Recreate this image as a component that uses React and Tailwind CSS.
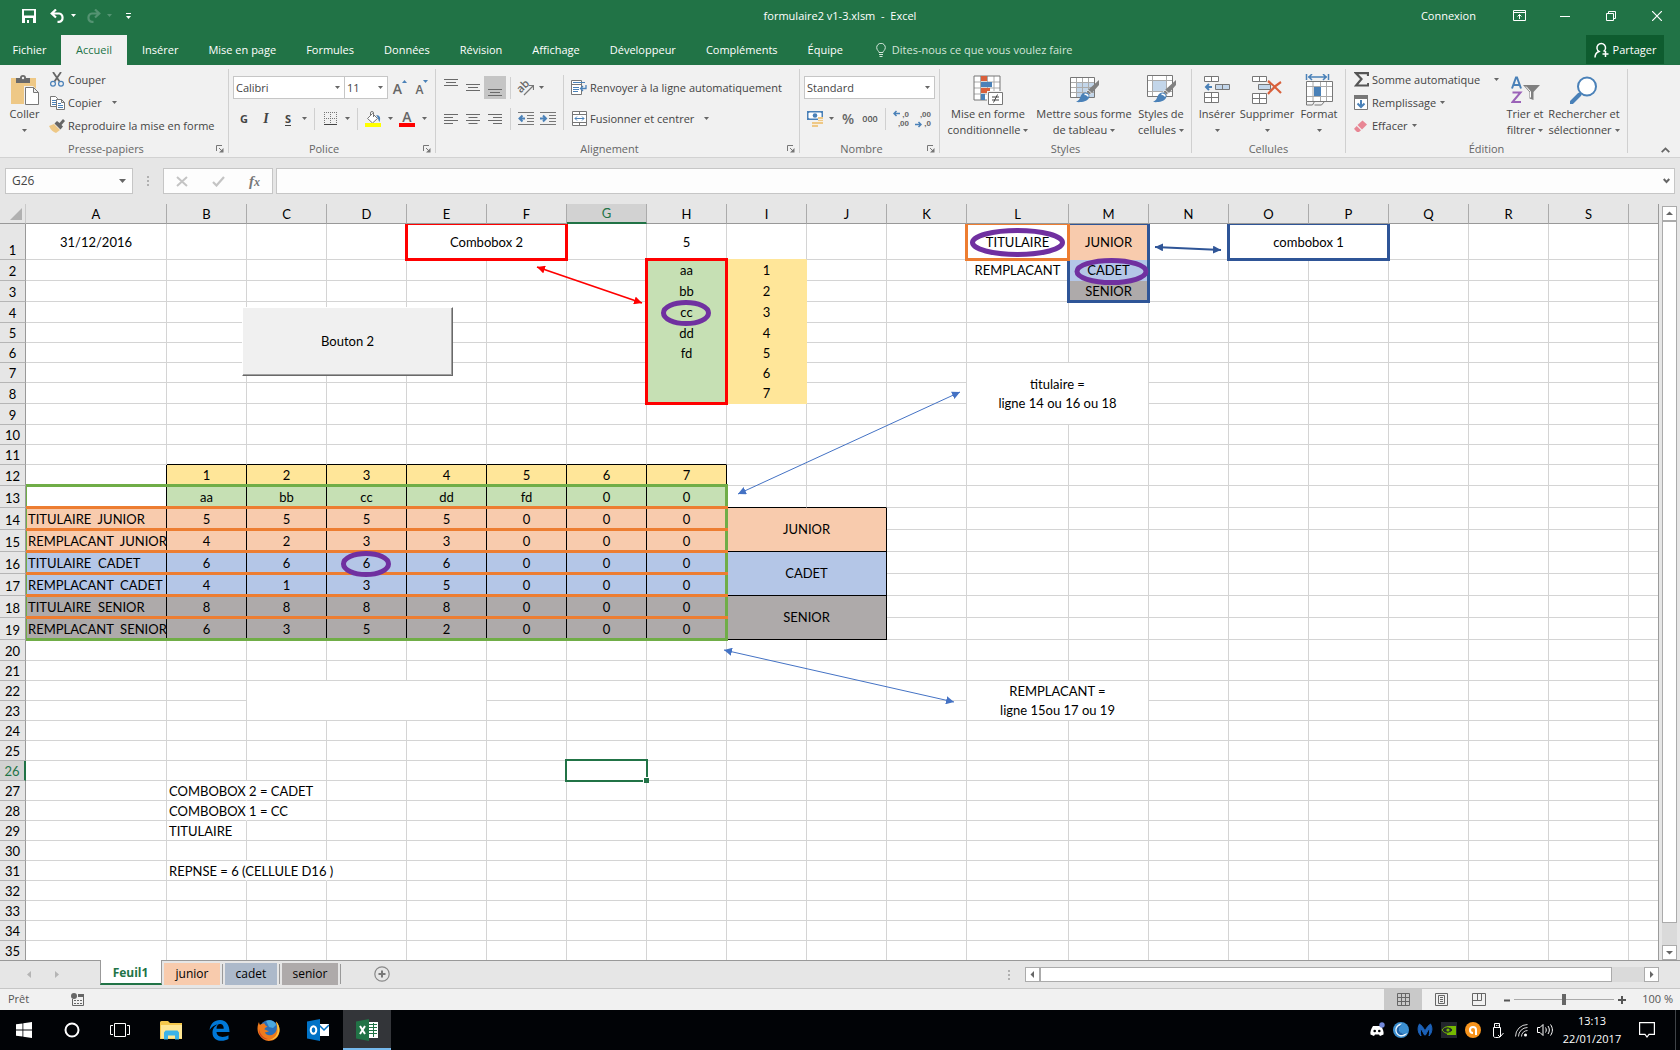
import { Fragment } from 'react';

const COLS = [
    ['A', 141], ['B', 80], ['C', 80], ['D', 80], ['E', 80], ['F', 80], ['G', 80], ['H', 80], ['I', 80], ['J', 80],
    ['K', 80], ['L', 102], ['M', 80], ['N', 80], ['O', 80], ['P', 80], ['Q', 80], ['R', 80], ['S', 80],
];
const ROWS = [36, 21, 21, 21, 20, 20, 20, 21, 21, 20, 20, 21, 22, 22, 22, 22, 22, 22, 22, 21, ...Array(15).fill(20)];
const LETTERS = COLS.map((c) => c[0]);

const GRID = 'border-r-[#d4d4d4] border-b-[#d4d4d4]';
const BLACK = 'border-r-black border-b-black';
const PEACH = 'bg-[#f8cbad]';
const BLUE = 'bg-[#b4c6e7]';
const GRAY = 'bg-[#aeaaaa]';
const YELLOW = 'bg-[#ffe699]';
const GREEN = 'bg-[#c6e0b4]';

const cells = {
    A1: { text: '31/12/2016' },
    E1: { text: 'Combobox 2', cols: 2 },
    H1: { text: '5' },
    I1: { line: 'border-r-[#d4d4d4] border-b-[#ffe699]' },
    L1: { text: 'TITULAIRE' },
    M1: { text: 'JUNIOR', fill: PEACH, line: 'border-r-[#f8cbad] border-b-[#f8cbad]' },
    O1: { text: 'combobox 1', cols: 2 },
    L2: { text: 'REMPLACANT' },
    M2: { text: 'CADET', fill: BLUE, line: 'border-r-[#b4c6e7] border-b-[#b4c6e7]' },
    M3: { text: 'SENIOR', fill: GRAY, line: 'border-r-[#aeaaaa] border-b-[#aeaaaa]' },
    L7: { text: 'titulaire =\nligne 14 ou 16 ou 18', cols: 2, rows: 3 },
    C22: { cols: 3, rows: 2 },
    L22: { text: 'REMPLACANT =\nligne 15ou 17 ou 19', cols: 2, rows: 2 },
    I13: { line: 'border-r-[#d4d4d4] border-b-black' },
    J13: { line: 'border-r-[#d4d4d4] border-b-black' },
    I14: { text: 'JUNIOR', cols: 2, rows: 2, fill: PEACH, line: BLACK },
    I16: { text: 'CADET', cols: 2, rows: 2, fill: BLUE, line: BLACK },
    I18: { text: 'SENIOR', cols: 2, rows: 2, fill: GRAY, line: BLACK },
    B27: { text: 'COMBOBOX 2 = CADET', left: true, line: 'border-r-white border-b-[#d4d4d4]' },
    B28: { text: 'COMBOBOX 1 = CC', left: true, line: 'border-r-white border-b-[#d4d4d4]' },
    B29: { text: 'TITULAIRE', left: true },
    B31: { text: 'REPNSE = 6 (CELLULE D16 )', left: true, line: 'border-r-white border-b-[#d4d4d4]' },
    C31: { line: 'border-r-white border-b-[#d4d4d4]' },
    A12: { line: 'border-r-black border-b-[#d4d4d4]' },
    A13: { line: 'border-r-black border-b-[#d4d4d4]' },
};

['aa', 'bb', 'cc', 'dd', 'fd', '', ''].forEach((text, i) => {
    cells['H' + (i + 2)] = { text, fill: GREEN, line: 'border-r-[#c6e0b4] border-b-[#c6e0b4]' };
    cells['I' + (i + 2)] = { text: String(i + 1), fill: YELLOW, line: 'border-r-[#ffe699] border-b-[#ffe699]' };
});

const scores = [
    [12, '', YELLOW, ['1', '2', '3', '4', '5', '6', '7']],
    [13, '', GREEN, ['aa', 'bb', 'cc', 'dd', 'fd', '0', '0']],
    [14, 'TITULAIRE  JUNIOR', PEACH, ['5', '5', '5', '5', '0', '0', '0']],
    [15, 'REMPLACANT  JUNIOR', PEACH, ['4', '2', '3', '3', '0', '0', '0']],
    [16, 'TITULAIRE  CADET', BLUE, ['6', '6', '6', '6', '0', '0', '0']],
    [17, 'REMPLACANT  CADET', BLUE, ['4', '1', '3', '5', '0', '0', '0']],
    [18, 'TITULAIRE  SENIOR', GRAY, ['8', '8', '8', '8', '0', '0', '0']],
    [19, 'REMPLACANT  SENIOR', GRAY, ['6', '3', '5', '2', '0', '0', '0']],
];
scores.forEach(([row, label, fill, values]) => {
    if (label) cells['A' + row] = { text: label, left: true, fill, line: BLACK };
    values.forEach((text, i) => {
        cells[LETTERS[i + 1] + row] = { text, fill, line: BLACK };
    });
});
LETTERS.slice(1, 8).forEach((l) => {
    cells[l + 11] = { line: 'border-r-[#d4d4d4] border-b-black' };
});

// cells hidden under a merged one
const covered = new Set();
Object.entries(cells).forEach(([ref, c]) => {
    const col = LETTERS.indexOf(ref[0]);
    const row = Number(ref.slice(1));
    for (let r = 0; r < (c.rows || 1); r++) {
        for (let k = 0; k < (c.cols || 1); k++) {
            if (r || k) covered.add(LETTERS[col + k] + (row + r));
        }
    }
});

const lineX = (n) => COLS.slice(0, n).reduce((sum, c) => sum + c[1], 0) - 1;
const lineY = (n) => ROWS.slice(0, n).reduce((sum, h) => sum + h, 0) - 1;

function Outline({ from, to, className, children }) {
    const x1 = lineX(LETTERS.indexOf(from[0]));
    const x2 = lineX(LETTERS.indexOf(to[0]) + 1);
    const y1 = lineY(Number(from.slice(1)) - 1);
    const y2 = lineY(Number(to.slice(1)));
    return (
        <div
            className={'absolute pointer-events-none ' + className}
            style={{ left: x1 - 1, top: y1 - 1, width: x2 - x1 + 3, height: y2 - y1 + 3 }}
        >
            {children}
        </div>
    );
}

function Caret({ color = '#666' }) {
    return (
        <svg width="5" height="3" viewBox="0 0 5 3" className="shrink-0">
            <path d="M0 0h5L2.5 3z" fill={color} />
        </svg>
    );
}

function Svg({ w = 16, h = 16, children, className = '' }) {
    return (
        <svg width={w} height={h} viewBox={`0 0 ${w} ${h}`} fill="none" className={'shrink-0 ' + className}>
            {children}
        </svg>
    );
}

/* ---------- title bar ---------- */

function TitleBar() {
    return (
        <div className="h-[35px] pb-1 grid grid-cols-[1fr_auto_1fr] items-center text-white">
            <div className="flex items-center pl-[22px]">
                <button aria-label="Enregistrer">
                    <Svg w={14} h={14}>
                        <path fillRule="evenodd" fill="#fff" d="M0 0h14v14H0zM2 1.500v5h10v-5zM3 9v5h2v-3h2v3h4V9z" />
                    </Svg>
                </button>
                <button aria-label="Annuler" className="ml-3.5">
                    <Svg w={15} h={14}>
                        <path d="M1.500 4.500H9a4.200 4.200 0 0 1 0 8.300H7.500M6 .5l-4.300 4L6 8.500" stroke="#fff" strokeWidth="2.200" />
                    </Svg>
                </button>
                <button aria-label="Options d'annulation" className="ml-1.5"><Caret color="#fff" /></button>
                <button aria-label="Rétablir" className="ml-2.5">
                    <Svg w={15} h={14}>
                        <path d="M13.500 4.500H6a4.200 4.200 0 0 0 0 8.300h1.500M9 .5l4.300 4L9 8.500" stroke="#549372" strokeWidth="2.200" />
                    </Svg>
                </button>
                <button aria-label="Options de rétablissement" className="ml-1.5"><Caret color="#549372" /></button>
                <button aria-label="Personnaliser la barre" className="ml-3.5">
                    <Svg w={5} h={6}>
                        <path d="M0 .5h5" stroke="#fff" />
                        <path d="M0 3h5L2.500 6z" fill="#fff" />
                    </Svg>
                </button>
            </div>
            <h1 className="text-[11px] leading-4 whitespace-pre">formulaire2 v1-3.xlsm  -  Excel</h1>
            <div className="flex items-center justify-end">
                <button className="mr-5">Connexion</button>
                <button aria-label="Options d'affichage du ruban" className="w-[46px] flex justify-center">
                    <Svg w={13} h={11}>
                        <path d="M.5.5h12v10H.5zM.5 2.500h12M6.500 9V4.500M4.500 6.500l2-2 2 2" stroke="#fff" />
                    </Svg>
                </button>
                <button aria-label="Réduire" className="w-[46px] flex justify-center">
                    <Svg w={10} h={10}><path d="M0 5.500h10" stroke="#fff" /></Svg>
                </button>
                <button aria-label="Restaurer" className="w-[46px] flex justify-center">
                    <Svg w={10} h={10}><path d="M.5 2.500h7v7h-7zM2.500 2.500v-2h7v7h-2" stroke="#fff" /></Svg>
                </button>
                <button aria-label="Fermer" className="w-[46px] flex justify-center">
                    <Svg w={10} h={10}><path d="M0 0l10 10M10 0L0 10" stroke="#fff" strokeWidth="1.200" /></Svg>
                </button>
            </div>
        </div>
    );
}

const tabs = ['Insérer', 'Mise en page', 'Formules', 'Données', 'Révision', 'Affichage', 'Développeur', 'Compléments', 'Équipe'];

function TabBar() {
    return (
        <div className="h-[30px] flex items-stretch text-white">
            <button className="w-[61px] pr-0.5">Fichier</button>
            <button className="w-[66px] bg-[#f1f1f1] text-[#217346]">Accueil</button>
            {tabs.map((t) => (
                <button key={t} className="px-[15px]">{t}</button>
            ))}
            <label className="flex items-center pl-[18px] gap-1.5 text-[#d3e5da]">
                <Svg w={10} h={14}>
                    <path d="M3 9.500C3 8 .7 7.200.7 4.600a4.200 4.200 0 0 1 8.600 0C9.300 7.200 7 8 7 9.500zM3 11.500h4M3.500 13.500h3" stroke="#d3e5da" />
                </Svg>
                <input
                    aria-label="Rechercher une commande"
                    placeholder="Dites-nous ce que vous voulez faire"
                    className="w-[220px] bg-transparent outline-none placeholder:text-[#d3e5da]"
                />
            </label>
            <button className="ml-auto mr-4 mb-px w-[78px] bg-[#0e5c2f] flex items-center justify-center gap-1">
                <Svg w={15} h={16}>
                    <path d="M1 15.500c0-3.500 1.500-5 4-6a4.300 4.300 0 1 1 4.500 0M11.500 9v6M8.500 12h6" stroke="#fff" strokeWidth="1.500" />
                </Svg>
                Partager
            </button>
        </div>
    );
}

/* ---------- ribbon ---------- */

function Group({ label, width, launcher, children }) {
    return (
        <Fragment>
            <section aria-label={label} className={'flex flex-col pt-1 shrink-0 ' + width}>
                <div className="h-[72px] flex">{children}</div>
                <div className="h-4 flex items-center text-[#666]">
                    <span className="flex-1 text-center">{label}</span>
                    {launcher && (
                        <button aria-label={'Options ' + label} className="w-4 pr-1 flex justify-end">
                            <Svg w={8} h={8}>
                                <path d="M.5 6V.5H6M3 3l3 3" stroke="#777" />
                                <path d="M7.500 3v4.500H3z" fill="#777" />
                            </Svg>
                        </button>
                    )}
                </div>
            </section>
            <div className="w-px h-[84px] mt-1 bg-[#d0d0d0] shrink-0" />
        </Fragment>
    );
}

function BigButton({ icon, lines, width }) {
    return (
        <button className={'flex flex-col items-center leading-4 whitespace-nowrap shrink-0 ' + width}>
            <span className="h-[37px] flex items-center pt-1">{icon}</span>
            <span>{lines[0]}</span>
            <span className="h-4 flex items-center gap-[3px]">{lines[1]}<Caret /></span>
        </button>
    );
}

function SmallButton({ icon, children, caret, gap = 'gap-1' }) {
    return (
        <button className={'h-[23px] flex items-center whitespace-nowrap ' + gap}>
            <span className="flex items-center gap-[3px]">
                <span className="w-4 flex justify-center">{icon}</span>
                {children}
            </span>
            {caret && <Caret />}
        </button>
    );
}

function Tool({ label, width = 'w-[22px]', active, children }) {
    return (
        <button aria-label={label} className={'h-[23px] flex items-center justify-center shrink-0 ' + width + (active ? ' bg-[#c5c5c5]' : '')}>
            {children}
        </button>
    );
}

function Sep() {
    return <div className="w-px h-[22px] mx-1 bg-[#d0d0d0] shrink-0" />;
}

function Picker({ label, value, width }) {
    return (
        <span className={'relative h-[23px] shrink-0 ' + width}>
            <select aria-label={label} defaultValue={value} className="appearance-none w-full h-full bg-white border border-[#c6c6c6] pl-0.5 text-[#444] outline-none">
                <option>{value}</option>
            </select>
            <span className="absolute right-[5px] top-[10px] pointer-events-none"><Caret /></span>
        </span>
    );
}

function Lines({ d }) {
    return <Svg w={14} h={18}><path d={d} stroke="#6a6a6a" /></Svg>;
}

const PasteIcon = (
    <Svg w={28} h={30}>
        <path d="M0 3h25v26H0z" fill="#eec886" />
        <path d="M5 8V3h4a3 3 0 0 1 6 0h4v5z" fill="#6a6a6a" />
        <circle cx="12" cy="3" r="1.200" fill="#f1f1f1" />
        <path d="M13 11h9l6 6v13H13z" fill="#f1f1f1" />
        <path d="M14.500 12.500h8l5 5v12h-13zM22.500 12.500v5h5" fill="#fff" stroke="#777" />
    </Svg>
);

const brush = (
    <Fragment>
        <path d="M30 5v5l-7 8-4-3z" fill="#808080" />
        <path d="M19 15l3.500 3-2 2-3.500-3z" fill="#808080" stroke="#f1f1f1" strokeWidth=".8" />
        <path d="M16 17.500c3-.5 5.500 2.500 4 5.500-2 4-9 4.500-13 4 3-1.500 3.500-3 4.500-5.500.8-2 2.500-3.700 4.500-4z" fill="#4a81b8" />
        <path d="M15.500 19.500c1.500-.5 3.500.5 3.500 2" stroke="#fff" strokeWidth="1.500" />
    </Fragment>
);

function Ribbon() {
    return (
        <div className="h-[93px] flex bg-[#f1f1f1] border-b border-[#d2d2d2] text-[#444]">
            <Group label="Presse-papiers" width="w-[228px]" launcher>
                <BigButton width="w-[49px]" icon={PasteIcon} lines={['Coller', '']} />
                <div className="flex flex-col -mt-px">
                    <SmallButton icon={
                        <Svg w={14} h={15}>
                            <path d="M3 0l6.500 9.500M11 0L4.500 9.500" stroke="#666" strokeWidth="1.800" />
                            <circle cx="3" cy="11.800" r="2.400" stroke="#4a81b8" strokeWidth="1.200" />
                            <circle cx="11" cy="11.800" r="2.400" stroke="#4a81b8" strokeWidth="1.200" />
                        </Svg>
                    }>Couper</SmallButton>
                    <SmallButton caret gap="gap-2.5" icon={
                        <Svg w={15} h={14}>
                            <path d="M.5.5h5l2 2v8h-7z" fill="#fff" stroke="#777" />
                            <path d="M2 4.500h4M2 6.500h4M2 8.500h4" stroke="#4a81b8" />
                            <path d="M6.500 3.500h5l3 3v7h-8zM11.500 3.500v3h3" fill="#fff" stroke="#777" />
                            <path d="M8 7.500h3M8 9.500h5M8 11.500h5" stroke="#4a81b8" />
                        </Svg>
                    }>Copier</SmallButton>
                    <SmallButton icon={
                        <Svg w={16} h={14}>
                            <path d="M0 7l5-2 6 6-4 3c-3-1-5-3-7-7z" fill="#eec886" />
                            <path d="M5.500 4.500L8 2l2.500 2L14 0l2 2-3.500 4 1.500 1.500-2.500 3z" fill="#666" />
                        </Svg>
                    }>Reproduire la mise en forme</SmallButton>
                </div>
            </Group>

            <Group label="Police" width="w-[206px]" launcher>
                <div className="flex flex-col gap-2 pt-[7px] pl-1">
                    <div className="flex">
                        <Picker label="Police" value="Calibri" width="w-[112px]" />
                        <Picker label="Taille de police" value="11" width="w-[44px] -ml-px mr-px" />
                        <Tool label="Augmenter la taille">
                            <span className="text-[14px] leading-4 font-semibold text-[#666] mt-0.5">A</span>
                            <Svg w={5} h={3} className="mb-3"><path d="M0 3h5L2.500 0z" fill="#4a81b8" /></Svg>
                        </Tool>
                        <Tool label="Réduire la taille">
                            <span className="text-[12px] leading-4 font-semibold text-[#666] mt-1">A</span>
                            <Svg w={5} h={3} className="mb-3"><path d="M0 0h5L2.500 3z" fill="#4a81b8" /></Svg>
                        </Tool>
                    </div>
                    <div className="flex items-center">
                        <Tool label="Gras"><b>G</b></Tool>
                        <Tool label="Italique"><i className="font-bold font-['Liberation_Serif',serif] text-[14px]">I</i></Tool>
                        <Tool label="Souligné"><b className="border-b border-[#444] leading-[13px]">S</b></Tool>
                        <Tool label="Options de soulignement" width="w-[11px]"><Caret /></Tool>
                        <Sep />
                        <Tool label="Bordures">
                            <Svg w={13} h={13}>
                                <path d="M0 .5h13M0 6.500h13M.5 0v12M6.500 0v12M12.500 0v12" stroke="#777" strokeDasharray="1 1" />
                                <path d="M0 12.500h13" stroke="#444" />
                            </Svg>
                        </Tool>
                        <Tool label="Options de bordure" width="w-3"><Caret /></Tool>
                        <Sep />
                        <Tool label="Couleur de remplissage">
                            <Svg w={16} h={16}>
                                <path d="M2.500 7.500l5-5 5 5-5 4.500zM5.500 5V2a1.500 1.500 0 0 1 3 0v4" fill="#fff" stroke="#777" />
                                <path d="M11 4c4 0 5 3 3.500 7-1-1-1-4-3.500-7z" fill="#4a81b8" />
                                <path d="M0 12h16v4H0z" fill="#ff0" />
                            </Svg>
                        </Tool>
                        <Tool label="Options de remplissage" width="w-3"><Caret /></Tool>
                        <Tool label="Couleur de police">
                            <span className="w-4 h-4 border-b-4 border-[#f00] text-[14px] leading-[12px] font-semibold text-[#666] text-center">A</span>
                        </Tool>
                        <Tool label="Options de couleur" width="w-3"><Caret /></Tool>
                    </div>
                </div>
            </Group>

            <Group label="Alignement" width="w-[363px]" launcher>
                <div className="flex flex-col gap-2 pt-[7px] pl-1">
                    <div className="flex items-center">
                        <Tool label="Aligner en haut"><Lines d="M0 .5h14M2 3.500h10M0 6.500h14" /></Tool>
                        <Tool label="Aligner au centre"><Lines d="M0 5.500h14M2 8.500h10M0 11.500h14" /></Tool>
                        <Tool label="Aligner en bas" active><Lines d="M0 10.500h14M2 13.500h10M0 16.500h14" /></Tool>
                        <Sep />
                        <Tool label="Orientation">
                            <span className="relative w-4 h-4">
                                <span className="absolute -left-0.5 top-0 -rotate-45 text-[11px] leading-3 font-semibold text-[#666]">ab</span>
                                <svg width="16" height="16" className="absolute left-0 top-0" fill="none"><path d="M6 15l9-9M11 5.500h4.500V10" stroke="#777" strokeWidth="1.200" /></svg>
                            </span>
                        </Tool>
                        <Tool label="Options d'orientation" width="w-2"><Caret /></Tool>
                    </div>
                    <div className="flex items-center">
                        <Tool label="Aligner à gauche"><Lines d="M0 4.500h14M0 7.500h9M0 10.500h14M0 13.500h9" /></Tool>
                        <Tool label="Centrer"><Lines d="M0 4.500h14M2.500 7.500h9M0 10.500h14M2.500 13.500h9" /></Tool>
                        <Tool label="Aligner à droite"><Lines d="M0 4.500h14M5 7.500h9M0 10.500h14M5 13.500h9" /></Tool>
                        <Sep />
                        <Tool label="Diminuer le retrait">
                            <Svg w={16} h={13}>
                                <path d="M0 .5h16M9 3.500h7M9 6.500h7M9 9.500h7M0 12.500h16" stroke="#777" />
                                <path d="M7 6.500H2M4.500 3.500l-3 3 3 3" stroke="#4a81b8" strokeWidth="2" />
                            </Svg>
                        </Tool>
                        <Tool label="Augmenter le retrait">
                            <Svg w={16} h={13}>
                                <path d="M0 .5h16M9 3.500h7M9 6.500h7M9 9.500h7M0 12.500h16" stroke="#777" />
                                <path d="M0 6.500h5M3 3.500l3 3-3 3" stroke="#4a81b8" strokeWidth="2" />
                            </Svg>
                        </Tool>
                    </div>
                </div>
                <div className="w-px h-[55px] mt-1.5 ml-1 bg-[#d0d0d0]" />
                <div className="flex flex-col gap-2 pt-[7px] pl-[7px]">
                    <SmallButton icon={
                        <Svg w={16} h={15}>
                            <path d="M.5.5h10v14H.5z" fill="#fff" stroke="#777" />
                            <path d="M0 4.500h11" stroke="#777" />
                            <path d="M2 2.500h12M2 7.500h6M2 9.500h6M2 11.500h5" stroke="#4a81b8" />
                            <path d="M15 5v3.500H9.500M12 6L9.500 8.500l2.500 2.500" stroke="#4a81b8" strokeWidth="1.300" />
                        </Svg>
                    }>Renvoyer à la ligne automatiquement</SmallButton>
                    <SmallButton caret gap="gap-2.5" icon={
                        <Svg w={15} h={15}>
                            <path d="M.5.5h14v14H.5zM.5 3.500h14M.5 11.500h14M7.500.5v3M7.500 11.500v3" fill="#fff" stroke="#777" />
                            <path d="M3 7.500h9M5 5.500l-2 2 2 2M10 5.500l2 2-2 2" stroke="#4a81b8" />
                        </Svg>
                    }>Fusionner et centrer</SmallButton>
                </div>
            </Group>

            <Group label="Nombre" width="w-[139px]" launcher>
                <div className="flex flex-col gap-2 pt-[7px] pl-1">
                    <Picker label="Format de nombre" value="Standard" width="w-[131px]" />
                    <div className="flex items-center">
                        <Tool label="Format comptable">
                            <Svg w={16} h={16}>
                                <path d="M0 0h16v9H0z" fill="#4a81b8" />
                                <path d="M1.500 2.500l1-1h11l1 1v4l-1 1h-11l-1-1z" fill="#fff" />
                                <circle cx="8" cy="4.500" r="2.300" fill="#4a81b8" />
                                <path d="M11 6h5v7h-5zM5 11h6v5H5z" fill="#eec886" />
                                <path d="M11 8.500h5M11 10.500h5M5 13.500h6" stroke="#fff" strokeWidth=".7" />
                            </Svg>
                        </Tool>
                        <Tool label="Options comptables" width="w-[11px]"><Caret /></Tool>
                        <Tool label="Pourcentage"><span className="text-[14px] font-semibold text-[#666]">%</span></Tool>
                        <Tool label="Séparateur de milliers"><span className="text-[9px] font-semibold text-[#555]">000</span></Tool>
                        <Sep />
                        <Tool label="Ajouter une décimale">
                            <span className="relative w-4 font-['Liberation_Sans',sans-serif] text-[8px] leading-[9px] font-bold text-[#666] text-right flex flex-col">
                                <span>,0</span><span>,00</span>
                                <svg width="7" height="7" className="absolute left-0 top-0" fill="none"><path d="M7 3.500H1M3.500 1L1 3.500 3.500 6" stroke="#4a81b8" strokeWidth="1.500" /></svg>
                            </span>
                        </Tool>
                        <Tool label="Réduire les décimales">
                            <span className="relative w-4 font-['Liberation_Sans',sans-serif] text-[8px] leading-[9px] font-bold text-[#666] text-right flex flex-col">
                                <span>,00</span><span>,0</span>
                                <svg width="7" height="7" className="absolute left-0 bottom-0" fill="none"><path d="M0 3.500h6M3.500 1L6 3.500 3.500 6" stroke="#4a81b8" strokeWidth="1.500" /></svg>
                            </span>
                        </Tool>
                    </div>
                </div>
            </Group>

            <Group label="Styles" width="w-[251px]">
                <BigButton width="w-[92px] ml-0.5" lines={['Mise en forme', 'conditionnelle']} icon={
                    <Svg w={30} h={30}>
                        <path d="M1 1h26v24H1z" fill="#fff" />
                        <path d="M1 7h26M1 13h26M1 19h26M7.500 1v24M14.500 1v24M21 1v24" stroke="#ababab" />
                        <path d="M1 1h26v24H1z" stroke="#777" />
                        <path d="M8 1h6v5H8zM8 13h9v5H8z" fill="#d9603b" />
                        <path d="M8 7h11v5H8zM8 19h4v6H8z" fill="#4a81b8" />
                        <path d="M14 16h16v14H14z" fill="#f1f1f1" />
                        <path d="M15.500 17.500h14v12h-14z" fill="#fff" stroke="#777" />
                        <path d="M19 22h7M19 25h7M24.500 19.500l-4 8" stroke="#444" />
                    </Svg>
                } />
                <BigButton width="w-[100px]" lines={['Mettre sous forme', 'de tableau']} icon={
                    <Svg w={30} h={30}>
                        <path d="M1.500 2.500h24v20h-24z" fill="#fff" />
                        <path d="M8 8h17v15H8z" fill="#c3d6ea" />
                        <path d="M1.500 7.500h24M1.500 12.500h24M1.500 17.500h24M7.500 2.500v20M13.500 2.500v20M19.500 2.500v20" stroke="#ababab" />
                        <path d="M1.500 2.500h24v20h-24z" stroke="#777" />
                        {brush}
                    </Svg>
                } />
                <BigButton width="w-[54px]" lines={['Styles de', 'cellules']} icon={
                    <Svg w={30} h={30}>
                        <path d="M1.500.5h25v21h-25z" fill="#fff" />
                        <path d="M7 6h14v10H7z" fill="#c3d6ea" />
                        <path d="M1.500 5.500h25M1.500 16.500h25M6.500.5v21M20.500.5v21" stroke="#ababab" />
                        <path d="M1.500.5h25v21h-25z" stroke="#777" />
                        {brush}
                    </Svg>
                } />
            </Group>

            <Group label="Cellules" width="w-[153px]">
                <BigButton width="w-[44px] ml-[3px]" lines={['Insérer', '']} icon={
                    <Svg w={27} h={30}>
                        <path d="M.5 1.500h14v5H.5zM7.500 1.500v5M.5 17.500h14v10H.5zM7.500 17.500v10M.5 22.500h14" fill="#fff" stroke="#777" />
                        <path d="M11.500 9.500h14v5h-14zM18.500 9.500v5" fill="#c3d6ea" stroke="#777" />
                        <path d="M8 12H2M5 9l-3 3 3 3" stroke="#4a81b8" strokeWidth="2" />
                    </Svg>
                } />
                <BigButton width="w-[56px]" lines={['Supprimer', '']} icon={
                    <Svg w={30} h={30}>
                        <path d="M.5 1.500h14v5H.5zM7.500 1.500v5M.5 18.500h14v10H.5zM7.500 18.500v10M.5 23.500h14" fill="#fff" stroke="#777" />
                        <path d="M6.500 9.500h12v5h-12z" fill="#c3d6ea" stroke="#777" />
                        <path d="M16 6c4 3 9 8 13 12M29 7c-5 3-9 7-13 12" stroke="#d9603b" strokeWidth="2.200" />
                    </Svg>
                } />
                <BigButton width="w-[46px] ml-px" lines={['Format', '']} icon={
                    <Svg w={29} h={32}>
                        <path d="M1.500 0v6M23.500 0v6M3 3h19M7 0L4 3l3 3M18 0l3 3-3 3" stroke="#4a81b8" strokeWidth="1.500" />
                        <path d="M1.500 7.500h26v20h-26z" fill="#fff" />
                        <path d="M1.500 12.500h26M1.500 22.500h26M8 7.500v20M15.500 7.500v20M21.500 7.500v20" stroke="#ababab" />
                        <path d="M1.500 7.500h26v20h-26zM1.500 27.500v3.500h6l2-3.500M9.500 31h7l3-3.500" stroke="#777" />
                        <path d="M9 13h7v9H9z" fill="#4a81b8" />
                    </Svg>
                } />
            </Group>

            <Group label="Édition" width="w-[281px]">
                <div className="flex flex-col w-[159px] pl-[7px] -mt-px items-start">
                    <SmallButton caret gap="gap-3.5" icon={
                        <Svg w={15} h={15}><path d="M14 4V1.200H2L7.500 7 2 13.500h12.200V11" stroke="#555" strokeWidth="2.200" /></Svg>
                    }>Somme automatique</SmallButton>
                    <SmallButton caret icon={
                        <Svg w={14} h={15}>
                            <path d="M.5.5h13v14H.5z" fill="#fff" stroke="#777" />
                            <path d="M0 0h14v4H0z" fill="#777" />
                            <path d="M7 5v7M3.500 8.500L7 12l3.500-3.500" stroke="#4a81b8" strokeWidth="2" />
                        </Svg>
                    }>Remplissage</SmallButton>
                    <SmallButton caret icon={
                        <Svg w={14} h={14}>
                            <path d="M8.500 1.500l4.500 4-5 5L3.500 6z" fill="#e88694" />
                            <path d="M2.700 7l4.300 4.300L5 13H3L.5 10.500v-1.300z" fill="#e88694" />
                        </Svg>
                    }>Effacer</SmallButton>
                </div>
                <BigButton width="w-10" lines={['Trier et', 'filtrer']} icon={
                    <Svg w={29} h={28}>
                        <path d="M1 12.500L5 1.500h1l4 11M2.500 9h6" stroke="#4a81b8" strokeWidth="2" />
                        <path d="M1.500 16.500h8l-8 9.500h8.500" stroke="#9b63b8" strokeWidth="2" />
                        <path d="M12 9h17l-6.500 7v8l-4-1.500V16z" fill="#808080" />
                        <path d="M15 10.500l4.500 5v6" stroke="#fff" />
                    </Svg>
                } />
                <BigButton width="w-[78px]" lines={['Rechercher et', 'sélectionner']} icon={
                    <Svg w={28} h={28}>
                        <path d="M1.500 26.500l8-8" stroke="#4a81b8" strokeWidth="4" strokeLinecap="round" />
                        <circle cx="17" cy="10.500" r="9" fill="#fff" stroke="#4a81b8" strokeWidth="2" />
                    </Svg>
                } />
            </Group>
            <button aria-label="Réduire le ruban" className="ml-auto mr-[10px] mt-auto pb-1">
                <Svg w={9} h={6}><path d="M.7 5.200l3.800-3.800 3.800 3.800" stroke="#666" strokeWidth="1.800" /></Svg>
            </button>
        </div>
    );
}

function FormulaBar() {
    return (
        <div className="flex items-stretch h-9 pt-2.5 pl-[5px] pr-[5px] text-[12px] text-[#444]">
            <div className="w-32 flex items-center bg-[#fdfdfd] border border-[#c6c6c6] pl-1.5 pr-1.5">
                <input aria-label="Zone Nom" defaultValue="G26" className="w-full min-w-0 bg-transparent outline-none" />
                <Svg w={7} h={4}><path d="M0 0h7L3.500 4z" fill="#666" /></Svg>
            </div>
            <div className="w-[30px] flex items-center justify-center">
                <Svg w={2} h={10}><path d="M0 0h2v2H0zM0 4h2v2H0zM0 8h2v2H0z" fill="#b0b0b0" /></Svg>
            </div>
            <div className="w-[110px] flex items-center justify-around bg-[#fdfdfd] border border-[#c6c6c6]">
                <button aria-label="Annuler la saisie">
                    <Svg w={12} h={11}><path d="M1 1l10 9M11 1L1 10" stroke="#c4c4c4" strokeWidth="2" /></Svg>
                </button>
                <button aria-label="Valider la saisie">
                    <Svg w={13} h={11}><path d="M1 6l3.500 3.500L12 1" stroke="#c4c4c4" strokeWidth="2.200" /></Svg>
                </button>
                <button aria-label="Insérer une fonction" className="font-['Liberation_Serif',serif] italic font-bold text-[#777] leading-4">
                    <span className="text-[15px]">f</span>x
                </button>
            </div>
            <div className="flex-1 ml-[3px] flex items-center bg-[#fdfdfd] border border-[#c6c6c6] pr-1">
                <input aria-label="Barre de formule" className="flex-1 min-w-0 px-1 bg-transparent outline-none" />
                <button aria-label="Développer la barre de formule">
                    <Svg w={7} h={6}><path d="M.7 1l2.800 3L6.300 1" stroke="#666" strokeWidth="2" /></Svg>
                </button>
            </div>
        </div>
    );
}

/* ---------- sheet ---------- */

function Sheet() {
    return (
        <div className="relative flex-1 min-w-0 overflow-hidden border-r border-[#9b9b9b] bg-white font-['Lato',sans-serif] text-[13px] leading-5 text-black">
            <table className="table-fixed w-full border-separate border-spacing-0">
                <colgroup>
                    <col className="w-[26px]" />
                    {COLS.map(([l, w]) => <col key={l} style={{ width: w }} />)}
                    <col />
                </colgroup>
                <thead>
                    <tr className="h-5 bg-[#e6e6e6]">
                        <th className="h-5 p-0 border-r border-b border-r-[#c9c9c9] border-b-[#999]">
                            <Svg w={12} h={12} className="ml-2.5"><path d="M12 0v12H0z" fill="#b1b1b1" /></Svg>
                        </th>
                        {LETTERS.map((l) => (
                            <th
                                key={l}
                                className={'h-5 p-0 font-normal leading-4 border-r border-r-[#ababab] ' + (l === 'G' ? 'bg-[#d2d2d2] text-[#217346] border-b-2 border-b-[#217346]' : 'border-b border-b-[#999]')}
                            >
                                {l}
                            </th>
                        ))}
                        <th className="h-5 p-0 border-b border-b-[#999]" />
                    </tr>
                </thead>
                <tbody>
                    {ROWS.map((h, i) => {
                        const row = i + 1;
                        return (
                            <tr key={row} style={{ height: h }}>
                                <th className={'p-0 font-normal align-bottom leading-[18px] border-b border-b-[#b5b5b5] ' + (row === 26 ? 'bg-[#d2d2d2] text-[#217346] border-r-2 border-r-[#217346]' : 'bg-[#e6e6e6] border-r border-r-[#999]')}>
                                    {row}
                                </th>
                                {LETTERS.map((l) => {
                                    const ref = l + row;
                                    if (covered.has(ref)) return null;
                                    const c = cells[ref] || {};
                                    return (
                                        <td
                                            key={l}
                                            colSpan={c.cols}
                                            rowSpan={c.rows}
                                            className={`p-0 border-r border-b whitespace-pre align-middle ${c.rows ? 'leading-[19px]' : 'leading-[18px]'} ${c.line || GRID} ${c.fill || ''} ${c.left ? 'text-left pl-0.5' : 'text-center'}`}
                                        >
                                            {c.text}
                                        </td>
                                    );
                                })}
                                <td className="p-0 border-b border-b-[#d4d4d4]" />
                            </tr>
                        );
                    })}
                </tbody>
            </table>

            {/* borders and shapes drawn over the cells */}
            <div className="absolute left-[26px] top-5 right-0 bottom-0 overflow-hidden pointer-events-none">
                <Outline from="E1" to="F1" className="border-3 border-[#f00]" />
                <Outline from="H2" to="H8" className="border-3 border-[#f00]" />
                <Outline from="M1" to="M3" className="border-3 border-[#2f5597]" />
                <Outline from="L1" to="L1" className="border-3 border-[#ed7d31]" />
                <Outline from="O1" to="P1" className="border-3 border-[#2f5597]" />
                <Outline from="A13" to="H19" className="border-3 border-[#70ad47]" />
                <Outline from="A14" to="H14" className="border-y-3 border-[#ed7d31]" />
                <Outline from="A16" to="H16" className="border-y-3 border-[#ed7d31]" />
                <Outline from="A18" to="H18" className="border-y-3 border-[#ed7d31]" />
                <Outline from="G26" to="G26" className="border-2 border-[#217346]">
                    <span className="absolute -right-[3px] -bottom-[3px] w-1.5 h-1.5 bg-[#217346] border-t border-l border-white" />
                </Outline>

                <svg className="absolute left-0 top-0 w-full h-full" fill="none">
                    <defs>
                        <marker id="thin" viewBox="0 0 8 8" refX="8" refY="4" markerWidth="8" markerHeight="8" markerUnits="userSpaceOnUse" orient="auto-start-reverse">
                            <path d="M0 0l8 4-8 4z" fill="#4472c4" />
                        </marker>
                        <marker id="dark" viewBox="0 0 8 8" refX="8" refY="4" markerWidth="8" markerHeight="8" markerUnits="userSpaceOnUse" orient="auto-start-reverse">
                            <path d="M0 0l8 4-8 4z" fill="#2f5597" />
                        </marker>
                        <marker id="red" viewBox="0 0 8 8" refX="8" refY="4" markerWidth="8" markerHeight="8" markerUnits="userSpaceOnUse" orient="auto-start-reverse">
                            <path d="M0 0l8 4-8 4z" fill="#f00" />
                        </marker>
                    </defs>
                    <path d="M511 43L616 79" stroke="#f00" strokeWidth="1.800" markerStart="url(#red)" markerEnd="url(#red)" />
                    <path d="M1129 23L1195 26" stroke="#2f5597" strokeWidth="1.800" markerStart="url(#dark)" markerEnd="url(#dark)" />
                    <path d="M712 270L934 168" stroke="#4472c4" markerStart="url(#thin)" markerEnd="url(#thin)" />
                    <path d="M698 426L928 478" stroke="#4472c4" markerStart="url(#thin)" markerEnd="url(#thin)" />
                    <g stroke="#7030a0" strokeWidth="5">
                        <ellipse cx="991.500" cy="18.500" rx="45" ry="12" />
                        <ellipse cx="1085.500" cy="47.500" rx="34.500" ry="11" />
                        <ellipse cx="660" cy="89" rx="22.500" ry="10.500" />
                        <ellipse cx="340" cy="340" rx="22.500" ry="10.500" />
                    </g>
                </svg>

                <button className="absolute left-[216px] top-[83px] w-[211px] h-[69px] pb-0.5 bg-[#f0f0f0] border border-t-white border-l-white border-r-[#696969] border-b-[#696969] shadow-[inset_-1px_-1px_0_#a0a0a0] pointer-events-auto">
                    Bouton 2
                </button>
            </div>
        </div>
    );
}

function ScrollButton({ label, d }) {
    return (
        <button aria-label={label} className="w-[15px] h-[15px] shrink-0 flex items-center justify-center bg-white border border-[#ababab]">
            <Svg w={7} h={7}><path d={d} fill="#666" /></Svg>
        </button>
    );
}

const sheetTabs = [
    ['junior', 'bg-[#f8cbad] w-14'],
    ['cadet', 'bg-[#acb9ca] w-[52px]'],
    ['senior', 'bg-[#aeaaaa] w-14'],
];

function SheetTabs() {
    return (
        <div className="h-7 flex border-t border-[#999] text-[12px] shrink-0">
            <div className="w-[100px] flex items-center pl-[27px] gap-6">
                <button aria-label="Feuille précédente"><Svg w={4} h={7}><path d="M4 0v7L0 3.500z" fill="#b5b5b5" /></Svg></button>
                <button aria-label="Feuille suivante"><Svg w={4} h={7}><path d="M0 0v7l4-3.500z" fill="#b5b5b5" /></Svg></button>
            </div>
            <button className="-mt-px w-[62px] h-[25px] pt-0.5 pr-px bg-white border-x border-x-[#999] border-b-2 border-b-[#217346] font-bold text-[#217346]">Feuil1</button>
            {sheetTabs.map(([name, cls]) => (
                <div key={name} className="flex mt-0.5 h-[22px] pl-0.5">
                    <button className={'text-black pb-px ' + cls}>{name}</button>
                    <div className="w-px ml-0.5 h-5 mt-px bg-[#999]" />
                </div>
            ))}
            <button aria-label="Nouvelle feuille" className="ml-[33px] h-[26px]">
                <Svg w={16} h={16}>
                    <circle cx="8" cy="8" r="7.200" stroke="#888" strokeWidth="1.200" />
                    <path d="M8 4.500v7M4.500 8h7" stroke="#777" strokeWidth="2" />
                </Svg>
            </button>
            <div className="ml-auto flex items-center pr-[21px] h-[27px]">
                <Svg w={2} h={10} className="mr-[15px]"><path d="M0 0h2v2H0zM0 4h2v2H0zM0 8h2v2H0z" fill="#b0b0b0" /></Svg>
                <ScrollButton label="Défiler à gauche" d="M5 0v7L1.500 3.500z" />
                <div className="w-[604px] h-[15px] bg-[#dadada]">
                    <div className="w-[572px] h-[15px] bg-white border border-[#ababab]" />
                </div>
                <ScrollButton label="Défiler à droite" d="M2 0v7l3.500-3.500z" />
            </div>
        </div>
    );
}

function StatusBar() {
    return (
        <div className="h-[22px] flex items-center bg-[#f1f1f1] border-t border-[#c6c6c6] text-[#555] shrink-0">
            <span className="w-[71px] pl-2 pb-0.5">Prêt</span>
            <button aria-label="Enregistrer une macro">
                <Svg w={13} h={13}>
                    <path d="M7 1h6v3H7z" fill="#666" />
                    <path d="M1.500 6v6.500h11V4M3 7.500h2M6 7.500h2M9 7.500h2M3 10.500h2M6 10.500h2M9 10.500h2" stroke="#666" />
                    <circle cx="3" cy="3" r="3" fill="#666" />
                </Svg>
            </button>
            <div className="ml-auto flex items-center h-full">
                <button aria-label="Normal" className="w-[38px] h-full flex items-center justify-center bg-[#c9c9c9]">
                    <Svg w={13} h={13}><path d="M.5.5h12v12H.5zM4.500.5v12M8.500.5v12M.5 4.500h12M.5 8.500h12" stroke="#666" /></Svg>
                </button>
                <button aria-label="Mise en page" className="w-[38px] flex justify-center">
                    <Svg w={13} h={13}><path d="M.5.5h12v12H.5zM3.500 2.500h6v8h-6zM5 4.500h3M5 6.500h3M5 8.500h3" stroke="#666" /></Svg>
                </button>
                <button aria-label="Aperçu des sauts de page" className="w-[38px] flex justify-center">
                    <Svg w={14} h={13}><path d="M.5.5h13v12H.5zM5.500.5v7M9.500.5v7M.5 7.500h9" stroke="#666" /></Svg>
                </button>
                <button aria-label="Zoom arrière" className="ml-0.5 w-[14px] flex justify-center">
                    <Svg w={6} h={6}><path d="M0 3.500h6" stroke="#555" strokeWidth="2" /></Svg>
                </button>
                <input
                    type="range"
                    aria-label="Zoom"
                    defaultValue="50"
                    className="appearance-none w-[100px] h-3 bg-[linear-gradient(#aaa,#aaa)] bg-[length:100%_1px] bg-center bg-no-repeat [&::-webkit-slider-thumb]:appearance-none [&::-webkit-slider-thumb]:w-1 [&::-webkit-slider-thumb]:h-[11px] [&::-webkit-slider-thumb]:bg-[#666]"
                />
                <button aria-label="Zoom avant" className="w-4 flex justify-center">
                    <Svg w={8} h={8}><path d="M0 4h8M4 0v8" stroke="#555" strokeWidth="2" /></Svg>
                </button>
                <button className="w-[50px] pr-[7px] pb-0.5 text-right">100 %</button>
            </div>
        </div>
    );
}

/* ---------- windows taskbar ---------- */

const apps = [
    ['Explorateur de fichiers', (
        <Svg w={22} h={19}>
            <path d="M0 1.500A1.500 1.500 0 0 1 1.500 0H8l2 2h12v16H0z" fill="#f5c84c" />
            <path d="M1 4h21v13.500H1z" fill="#ffe794" />
            <path d="M4 18.500v-7l1.500-2h12l1.500 2v7h-4v-4H8v4z" fill="#3bb3e8" />
        </Svg>
    )],
    ['Edge', (
        <Svg w={21} h={21}>
            <path d="M.5 10C1.500 3.500 5.500 0 11 0c6.500 0 9.500 5 9.500 12H7.500c.5 5.500 7 6 12 3.300V19c-6.500 3.500-16.500 2-16-7 .3-4 3-6.500 5.500-7.700C5.500 5 2.500 7 .5 10zM7.500 8.700h7.200c0-3.500-1.700-4.700-3.700-4.700-2 0-3.500 1.800-3.500 4.700z" fill="#0078d7" />
        </Svg>
    )],
    ['Firefox', (
        <Svg w={23} h={22}>
            <circle cx="12" cy="10.500" r="9.500" fill="#2a6fb8" />
            <path d="M9 2c4-2 9 0 10 4l-3 3-4-1z" fill="#4aa8dd" />
            <path d="M2 3c-2 4-2 9 0 12.500C5 21 10 23 15 21.500c5-1.500 8-6 7.500-11.500-.3-3-1.500-5.500-3.500-7.500 1 3 1.200 6 .5 8.500-1 4-5 6-8.500 5-2-.5-3-2-3-3 1.500.5 3 0 4-1-2 0-3-1.500-4.500-1.500 0-1.500 1.500-2 3-3C9 7 8 6 7.500 4.500 5.500 4.500 4 5 3 6c-.5-1-1-2-1-3z" fill="#ee7b1c" />
            <path d="M19 2.500c4 4 4.500 10 1.500 14.500-2 2.500-5 4-8 4 5-1.500 8-5 8-9.500 0-3-.5-6-1.500-9z" fill="#fdc63c" />
            <path d="M2 10c1 5 4 9 9 10-5 1-10-4-9-10z" fill="#d6461f" />
        </Svg>
    )],
    ['Outlook', (
        <Svg w={22} h={22}>
            <path d="M11 5h11v12H11z" fill="#fff" />
            <path d="M12 6l5 5 5-5" stroke="#0072c6" strokeWidth="1.500" />
            <path d="M0 2.500L13 0v22L0 19.500z" fill="#0072c6" />
            <ellipse cx="6.500" cy="11" rx="2.800" ry="3.800" stroke="#fff" strokeWidth="2" />
        </Svg>
    )],
];

function Taskbar() {
    return (
        <div className="h-10 flex items-stretch bg-[#010306] text-white shrink-0">
            <button aria-label="Démarrer" className="w-12 flex items-center justify-center">
                <Svg w={16} h={16}><path d="M0 2.300L6.500 1.400v6.200H0zM7.300 1.300L16 0v7.600H7.300zM0 8.400h6.500v6.200L0 13.700zM7.300 8.400H16V16l-8.700-1.300z" fill="#fff" /></Svg>
            </button>
            <button aria-label="Cortana" className="w-12 flex items-center justify-center">
                <Svg w={16} h={16}><circle cx="8" cy="8" r="6.500" stroke="#fff" strokeWidth="2" /></Svg>
            </button>
            <button aria-label="Affichage des tâches" className="w-12 flex items-center justify-center">
                <Svg w={20} h={15}><path d="M4.500.5h11v13h-11zM3 2.500H.5v9H3M17 2.500h2.500v9H17" stroke="#fff" /></Svg>
            </button>
            <div className="flex pl-0.5">
                {apps.map(([name, icon]) => (
                    <button key={name} aria-label={name} className="w-[49px] flex items-center justify-center">{icon}</button>
                ))}
            </div>
            <button aria-label="Excel" className="w-12 ml-px pt-0.5 flex items-center justify-center bg-[#333539] border-b-2 border-[#76b9ed]">
                <Svg w={22} h={22}>
                    <path d="M12 3h10v16H12z" fill="#fff" />
                    <path d="M13 5.500h8M13 8.500h8M13 11.500h8M13 14.500h8M17.500 4v14" stroke="#217346" />
                    <path d="M0 2.500L13 0v22L0 19.500z" fill="#217346" />
                    <path d="M4 7l5 8M9 7l-5 8" stroke="#fff" strokeWidth="2" />
                </Svg>
            </button>
            <div className="ml-auto flex items-center">
                <button aria-label="Discord" className="w-6 flex justify-center">
                    <Svg w={16} h={16}>
                        <path d="M4 4h8c2 3 3 6 2.500 8.500L11 14l-1-1.500H6L5 14l-3.500-1.500C1 10 2 7 4 4z" fill="#fff" />
                        <circle cx="5.700" cy="9" r="1.300" fill="#010306" /><circle cx="10.300" cy="9" r="1.300" fill="#010306" />
                        <circle cx="13" cy="3" r="2.700" fill="#7289da" />
                    </Svg>
                </button>
                <button aria-label="Navigateur" className="w-6 flex justify-center">
                    <Svg w={16} h={16}>
                        <circle cx="8" cy="8" r="8" fill="#3b8fd0" />
                        <path d="M9 1.500a6.500 6.500 0 1 0 5.500 9.500C10 13.500 6 10.500 6 7c0-2.500 1.200-4.500 3-5.500z" fill="#e6f2fa" />
                        <path d="M9 3.500a4.800 4.800 0 1 0 3 8C8.500 12 5.800 9.500 6 7c0-1.500 1.200-3 3-3.500z" fill="#1d62a8" />
                    </Svg>
                </button>
                <button aria-label="Malwarebytes" className="w-6 flex justify-center">
                    <Svg w={16} h={16}><path d="M4 14C1 11 0 6 2.500 2 4 3 6.500 5.500 8 9c1.500-3.500 4-6 5.500-7C16 6 15 11 12 14c.7-2.500.7-5 0-7.500L8.500 13h-1L4 6.500C3.300 9 3.300 11.500 4 14z" fill="#1c62b9" stroke="#1c62b9" /></Svg>
                </button>
                <button aria-label="NVIDIA" className="w-6 flex justify-center">
                    <Svg w={16} h={16}>
                        <path d="M0 0h16v16H0z" fill="#23262d" />
                        <path d="M6 4h9v9H6z" fill="#76b900" />
                        <path d="M1 8c3-4.500 8-4 11 0-3 4-8 4.500-11 0z" fill="#23262d" stroke="#76b900" />
                        <circle cx="7" cy="8" r="1.600" fill="#76b900" />
                    </Svg>
                </button>
                <button aria-label="Avast" className="w-6 flex justify-center">
                    <Svg w={16} h={16}>
                        <circle cx="8" cy="8" r="8" fill="#f7941d" />
                        <path d="M11 13V8a3 3 0 1 0-3 3" stroke="#fff" strokeWidth="2" />
                    </Svg>
                </button>
                <button aria-label="Retirer le périphérique" className="w-6 flex justify-center">
                    <Svg w={13} h={17}><path d="M2.500 5.500h7v8.500c0 1-1 1.500-2 1.500h-3c-1 0-2-.5-2-1.500zM3.500 5.500v-4h5v4M5 3.500h.8M6.700 3.500h.8M7 13l2 2 3.500-4" stroke="#fff" /></Svg>
                </button>
                <button aria-label="Réseau" className="w-6 flex justify-center">
                    <Svg w={14} h={14}>
                        <path d="M1.500 13.500A12 12 0 0 1 13.500 1.500M4.500 13.500a9 9 0 0 1 9-9M7.500 13.500a6 6 0 0 1 6-6" stroke="#d8d8d8" />
                        <circle cx="11.500" cy="12" r="1.500" fill="#fff" />
                    </Svg>
                </button>
                <button aria-label="Volume" className="w-6 flex justify-center">
                    <Svg w={17} h={14}><path d="M.5 4.500H3l3-3v11l-3-3H.5zM8.500 4.500c1 1.500 1 3.500 0 5M11 3c1.800 2.500 1.800 5.500 0 8M13.500 1.500c2.500 3.500 2.500 7.500 0 11" stroke="#fff" /></Svg>
                </button>
                <time className="w-[70px] text-center leading-[18px]">13:13<br />22/01/2017</time>
                <button aria-label="Centre de notifications" className="w-10 flex justify-center">
                    <Svg w={16} h={16}><path d="M.6.600h14.800v11.800H10L8 15l-2-2.600H.6z" stroke="#fff" strokeWidth="1.200" /></Svg>
                </button>
                <div className="w-[13px] self-stretch flex justify-end pr-1">
                    <div className="w-px bg-[#3f4347]" />
                </div>
            </div>
        </div>
    );
}

export default function App() {
    return (
        <div className="h-screen flex flex-col overflow-hidden bg-[#e6e6e6] font-['Open_Sans','Segoe_UI',sans-serif] text-[11px] leading-4">
            <header className="bg-[#217346] shrink-0">
                <TitleBar />
                <TabBar />
            </header>
            <Ribbon />
            <FormulaBar />
            <main className="flex-1 min-h-0 flex pt-2.5">
                <Sheet />
                <div className="w-[15px] ml-[3px] mr-[3px] mt-0.5 flex flex-col items-center shrink-0">
                    <ScrollButton label="Défiler vers le haut" d="M0 5h7L3.500 1.500z" />
                    <div className="flex-1 w-full flex flex-col bg-[#dadada]">
                        <div className="flex-[97%] bg-white border border-[#ababab]" />
                        <div className="flex-[3%]" />
                    </div>
                    <ScrollButton label="Défiler vers le bas" d="M0 2h7L3.500 5.500z" />
                </div>
            </main>
            <SheetTabs />
            <StatusBar />
            <Taskbar />
        </div>
    );
}
